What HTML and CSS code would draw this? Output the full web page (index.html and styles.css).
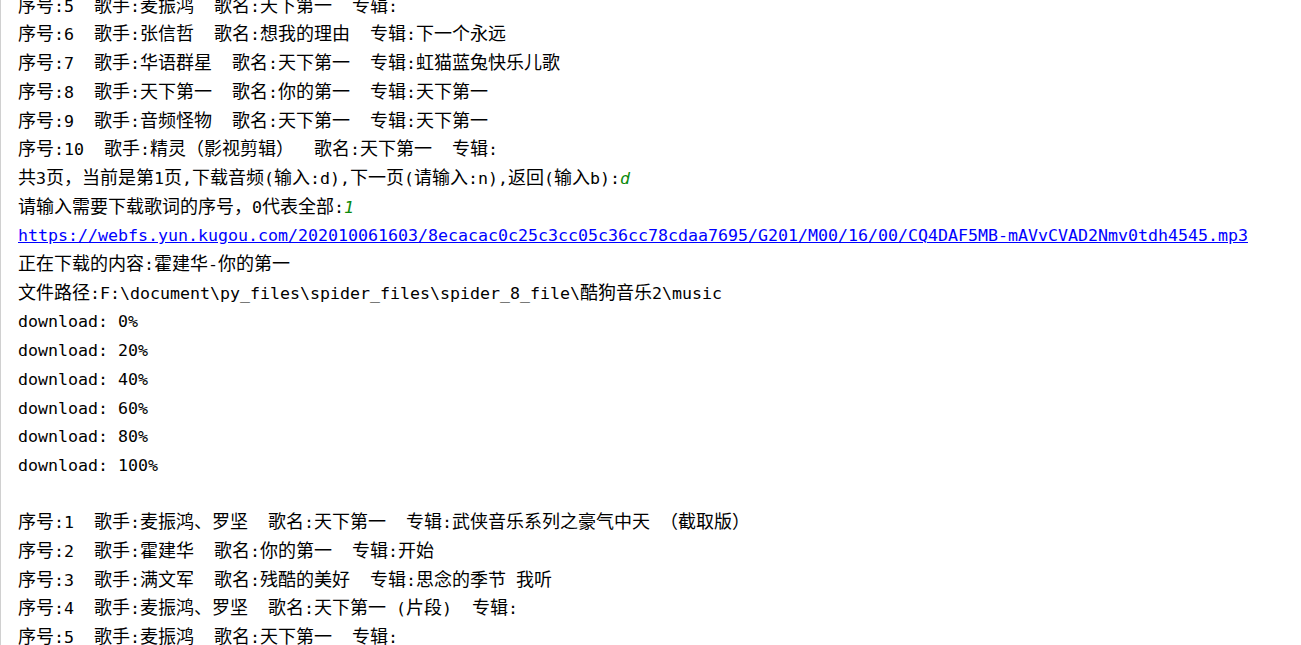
FILE: index.html
```html
<!DOCTYPE html>
<html lang="zh-CN">
<head>
<meta charset="utf-8">
<title>Console</title>
<link rel="stylesheet" href="styles.css">
</head>
<body>
<div class="console">
  <div class="out">
    <div class="line"><span class="c">序号</span>:5  <span class="c">歌手</span>:<span class="c">麦振鸿</span>  <span class="c">歌名</span>:<span class="c">天下第一</span>  <span class="c">专辑</span>:</div>
    <div class="line"><span class="c">序号</span>:6  <span class="c">歌手</span>:<span class="c">张信哲</span>  <span class="c">歌名</span>:<span class="c">想我的理由</span>  <span class="c">专辑</span>:<span class="c">下一个永远</span></div>
    <div class="line"><span class="c">序号</span>:7  <span class="c">歌手</span>:<span class="c">华语群星</span>  <span class="c">歌名</span>:<span class="c">天下第一</span>  <span class="c">专辑</span>:<span class="c">虹猫蓝兔快乐儿歌</span></div>
    <div class="line"><span class="c">序号</span>:8  <span class="c">歌手</span>:<span class="c">天下第一</span>  <span class="c">歌名</span>:<span class="c">你的第一</span>  <span class="c">专辑</span>:<span class="c">天下第一</span></div>
    <div class="line"><span class="c">序号</span>:9  <span class="c">歌手</span>:<span class="c">音频怪物</span>  <span class="c">歌名</span>:<span class="c">天下第一</span>  <span class="c">专辑</span>:<span class="c">天下第一</span></div>
    <div class="line"><span class="c">序号</span>:10  <span class="c">歌手</span>:<span class="c">精灵（影视剪辑）</span>  <span class="c">歌名</span>:<span class="c">天下第一</span>  <span class="c">专辑</span>:</div>
    <div class="line"><span class="c">共</span>3<span class="c">页，当前是第</span>1<span class="c">页</span>,<span class="c">下载音频</span>(<span class="c">输入</span>:d),<span class="c">下一页</span>(<span class="c">请输入</span>:n),<span class="c">返回</span>(<span class="c">输入</span>b):<span class="input">d</span></div>
    <div class="line"><span class="c">请输入需要下载歌词的序号，</span>0<span class="c">代表全部</span>:<span class="input">1</span></div>
    <div class="line"><a class="link" href="#">https://webfs.yun.kugou.com/202010061603/8ecacac0c25c3cc05c36cc78cdaa7695/G201/M00/16/00/CQ4DAF5MB-mAVvCVAD2Nmv0tdh4545.mp3</a></div>
    <div class="line"><span class="c">正在下载的内容</span>:<span class="c">霍建华</span>-<span class="c">你的第一</span></div>
    <div class="line"><span class="c">文件路径</span>:F:\document\py_files\spider_files\spider_8_file\<span class="c">酷狗音乐</span>2\music</div>
    <div class="line">download: 0%</div>
    <div class="line">download: 20%</div>
    <div class="line">download: 40%</div>
    <div class="line">download: 60%</div>
    <div class="line">download: 80%</div>
    <div class="line">download: 100%</div>
    <div class="line"> </div>
    <div class="line"><span class="c">序号</span>:1  <span class="c">歌手</span>:<span class="c">麦振鸿、罗坚</span>  <span class="c">歌名</span>:<span class="c">天下第一</span>  <span class="c">专辑</span>:<span class="c">武侠音乐系列之豪气中天</span> <span class="c">（截取版）</span></div>
    <div class="line"><span class="c">序号</span>:2  <span class="c">歌手</span>:<span class="c">霍建华</span>  <span class="c">歌名</span>:<span class="c">你的第一</span>  <span class="c">专辑</span>:<span class="c">开始</span></div>
    <div class="line"><span class="c">序号</span>:3  <span class="c">歌手</span>:<span class="c">满文军</span>  <span class="c">歌名</span>:<span class="c">残酷的美好</span>  <span class="c">专辑</span>:<span class="c">思念的季节</span> <span class="c">我听</span></div>
    <div class="line"><span class="c">序号</span>:4  <span class="c">歌手</span>:<span class="c">麦振鸿、罗坚</span>  <span class="c">歌名</span>:<span class="c">天下第一</span> (<span class="c">片段</span>)  <span class="c">专辑</span>:</div>
    <div class="line"><span class="c">序号</span>:5  <span class="c">歌手</span>:<span class="c">麦振鸿</span>  <span class="c">歌名</span>:<span class="c">天下第一</span>  <span class="c">专辑</span>:</div>
  </div>
</div>
</body>
</html>
```

FILE: styles.css
```css
html, body {
  margin: 0;
  padding: 0;
  background: #ffffff;
  overflow: hidden;
}

.console {
  height: 645px;
  border-left: 1px solid #d0d0d0;
  overflow: hidden;
  box-sizing: border-box;
}

.out {
  margin-top: -10.3px;
  padding-left: 17px;
  font-family: "DejaVu Sans Mono", "Noto Sans CJK SC", monospace;
  font-size: 16.61px;
  line-height: 28.71px;
  color: #000000;
}

.line {
  white-space: pre;
  height: 28.71px;
}

.line::before {
  content: "\200b";
  font-family: "Noto Sans CJK SC", sans-serif;
  font-size: 18px;
}

.c {
  font-family: "Noto Sans CJK SC", sans-serif;
  font-size: 18px;
}

.input {
  color: #0b8a0b;
  font-style: italic;
}

.link {
  color: #0000ff;
  text-decoration: underline;
}
```
